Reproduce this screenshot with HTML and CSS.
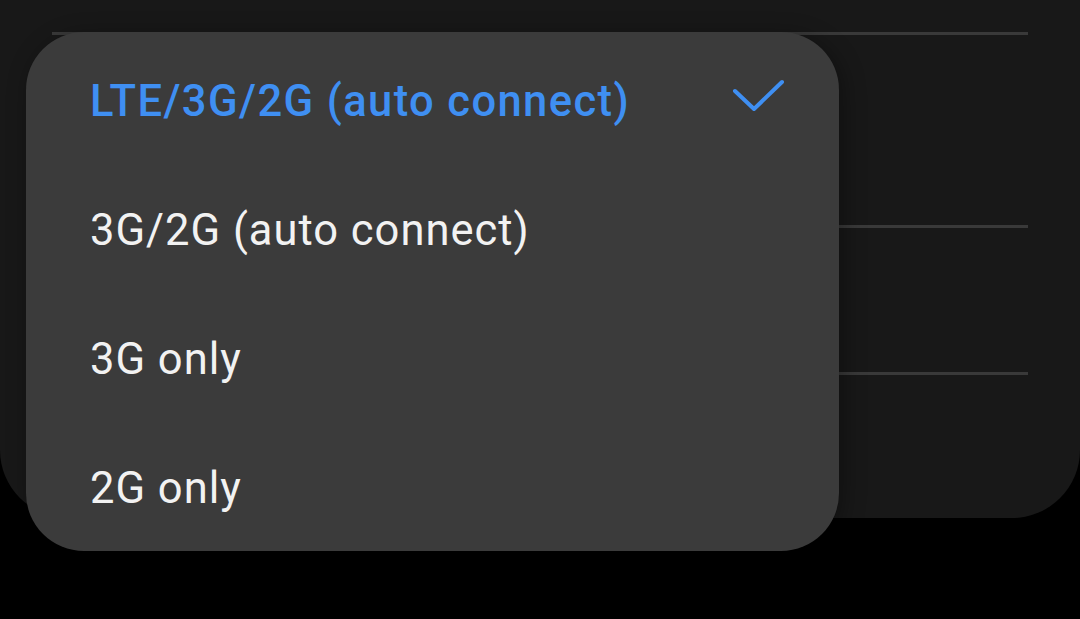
FILE: index.html
```html
<!DOCTYPE html>
<html lang="en">
<head>
  <meta charset="UTF-8">
  <meta name="viewport" content="width=device-width, initial-scale=1.0">
  <title>Network mode</title>
  <link rel="stylesheet" href="styles.css">
</head>
<body>
  <div class="screen">
    <div class="card">
      <div class="row row-top"></div>
      <div class="divider"></div>
      <div class="row row-mid"></div>
      <div class="divider"></div>
      <div class="row row-low"></div>
      <div class="divider"></div>
      <div class="row row-end"></div>
    </div>

    <ul class="menu">
      <li class="menu-item selected">
        <span>LTE/3G/2G (auto connect)</span>
        <svg class="check" width="56" height="40" viewBox="0 0 56 40">
          <path d="M4 13 L23 31 L51 4" fill="none" stroke="#3f8ff2" stroke-width="4" stroke-linecap="round" stroke-linejoin="round"/>
        </svg>
      </li>
      <li class="menu-item"><span>3G/2G (auto connect)</span></li>
      <li class="menu-item"><span>3G only</span></li>
      <li class="menu-item"><span>2G only</span></li>
    </ul>
  </div>
</body>
</html>
```

FILE: styles.css
```css
html, body {
  margin: 0;
  padding: 0;
  background: #000;
}
body {
  font-family: Roboto, "Liberation Sans", sans-serif;
  overflow: hidden;
}
.screen {
  position: relative;
  width: 1080px;
  height: 619px;
}
.card {
  background: #181818;
  border-radius: 0 0 68px 68px;
  padding: 0 52px;
  display: flex;
  flex-direction: column;
}
.row-top {
  height: 32px;
}
.row-mid {
  height: 190px;
}
.row-low {
  height: 144px;
}
.row-end {
  height: 143px;
}
.divider {
  height: 3px;
  background: #393939;
}
.menu {
  position: absolute;
  left: 26px;
  top: 32px;
  width: 813px;
  margin: 0;
  padding: 5px 0 0;
  list-style: none;
  box-sizing: border-box;
  height: 519px;
  background: #3b3b3b;
  border-radius: 58px;
  box-shadow: 4px 4px 22px rgba(0, 0, 0, 0.35);
}
.menu-item {
  height: 129px;
  display: flex;
  align-items: center;
  justify-content: space-between;
  padding: 0 52px 0 64px;
  font-size: 43.5px;
  letter-spacing: 1px;
  color: #f2f2f2;
}
.menu-item.selected {
  color: #3f8ff2;
  font-weight: 500;
  letter-spacing: 1.4px;
}
.check {
  display: block;
  margin-top: -8px;
}
```
